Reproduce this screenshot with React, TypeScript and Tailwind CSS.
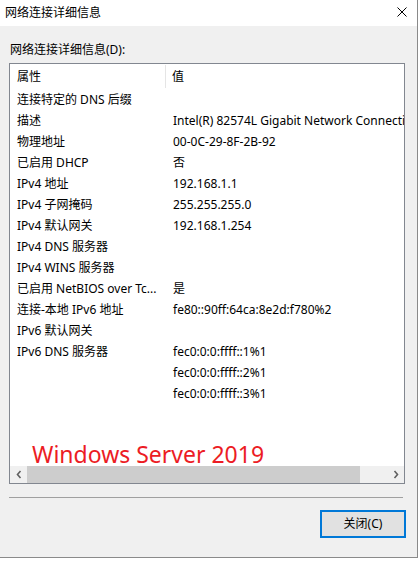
import React from 'react';

const rows: [string, string][] = [
    ['连接特定的 DNS 后缀', ''],
    ['描述', 'Intel(R) 82574L Gigabit Network Connection'],
    ['物理地址', '00-0C-29-8F-2B-92'],
    ['已启用 DHCP', '否'],
    ['IPv4 地址', '192.168.1.1'],
    ['IPv4 子网掩码', '255.255.255.0'],
    ['IPv4 默认网关', '192.168.1.254'],
    ['IPv4 DNS 服务器', ''],
    ['IPv4 WINS 服务器', ''],
    ['已启用 NetBIOS over Tc...', '是'],
    ['连接-本地 IPv6 地址', 'fe80::90ff:64ca:8e2d:f780%2'],
    ['IPv6 默认网关', ''],
    ['IPv6 DNS 服务器', 'fec0:0:0:ffff::1%1'],
    ['', 'fec0:0:0:ffff::2%1'],
    ['', 'fec0:0:0:ffff::3%1'],
];

const Chevron: React.FC<{ dir: 'left' | 'right' }> = ({ dir }) => (
    <svg width="8" height="9" viewBox="0 0 8 9">
        <path
            d={dir === 'left' ? 'M5.5 1 L2.5 4.5 L5.5 8' : 'M2.5 1 L5.5 4.5 L2.5 8'}
            fill="none"
            stroke="#606060"
            strokeWidth="1.6"
        />
    </svg>
);

const App: React.FC = () => {
    return (
        <div
            className="w-[419px] h-[562px] bg-white overflow-hidden text-[12px] text-black"
            style={{ fontFamily: '"Noto Sans", "Noto Sans CJK SC", sans-serif' }}
        >
            <div className="w-[418px] h-[558px] border-r border-b border-[#8a8a8a] flex flex-col">
                {/* title bar */}
                <div className="h-[26px] bg-white flex items-center justify-between pl-[5px] pr-[10px]">
                    <span className="leading-[16px] mb-[1px]">网络连接详细信息</span>
                    <svg width="10" height="10" viewBox="0 0 10 10" className="mb-[2px]">
                        <path d="M0.5 0.5 L9.5 9.5 M9.5 0.5 L0.5 9.5" stroke="#000" strokeWidth="1" />
                    </svg>
                </div>

                <div className="flex-1 bg-[#f0f0f0] pl-[9px] flex flex-col">
                    <div className="pt-[16px] pl-[1px] leading-[16px]">网络连接详细信息(D):</div>

                    {/* list view */}
                    <div className="relative mt-[5px] w-[396px] h-[421px] border border-[#828790] bg-white flex flex-col">
                        <div className="flex-1 overflow-hidden">
                            <div className="flex h-[25px] items-center">
                                <div className="w-[156px] pl-[7px] leading-[16px] border-r border-[#e5e5e5] h-[23px] flex items-center">属性</div>
                                <div className="pl-[6px] leading-[16px]">值</div>
                            </div>
                            {rows.map(([k, v], i) => (
                                <div key={i} className="flex h-[21px] items-center whitespace-nowrap">
                                    <div className="w-[156px] shrink-0 pl-[7px] leading-[16px] overflow-hidden">{k}</div>
                                    <div className="pl-[7px] leading-[16px]">{v}</div>
                                </div>
                            ))}
                        </div>

                        {/* horizontal scrollbar */}
                        <div className="h-[17px] flex bg-[#f0f0f0]">
                            <div className="w-[17px] flex items-center justify-center">
                                <Chevron dir="left" />
                            </div>
                            <div className="w-[333px] bg-[#cdcdcd]" />
                            <div className="flex-1" />
                            <div className="w-[17px] flex items-center justify-center">
                                <Chevron dir="right" />
                            </div>
                        </div>

                        <div
                            className="absolute left-[22px] top-[379px] text-[23px] leading-[23px] text-[#ec1c24] whitespace-nowrap"
                            style={{ fontFamily: '"Noto Sans", sans-serif' }}
                        >
                            Windows Server 2019
                        </div>
                    </div>

                    <div className="mt-[13px] w-[394px] h-px bg-[#a0a0a0]" />

                    <div className="mt-[12px] w-[397px] flex justify-end">
                        <button className="w-[86px] h-[28px] border-2 border-[#0078d7] bg-[#e1e1e1] flex items-center justify-center leading-[16px]">
                            关闭(C)
                        </button>
                    </div>
                </div>
            </div>
        </div>
    );
};

export default App;
